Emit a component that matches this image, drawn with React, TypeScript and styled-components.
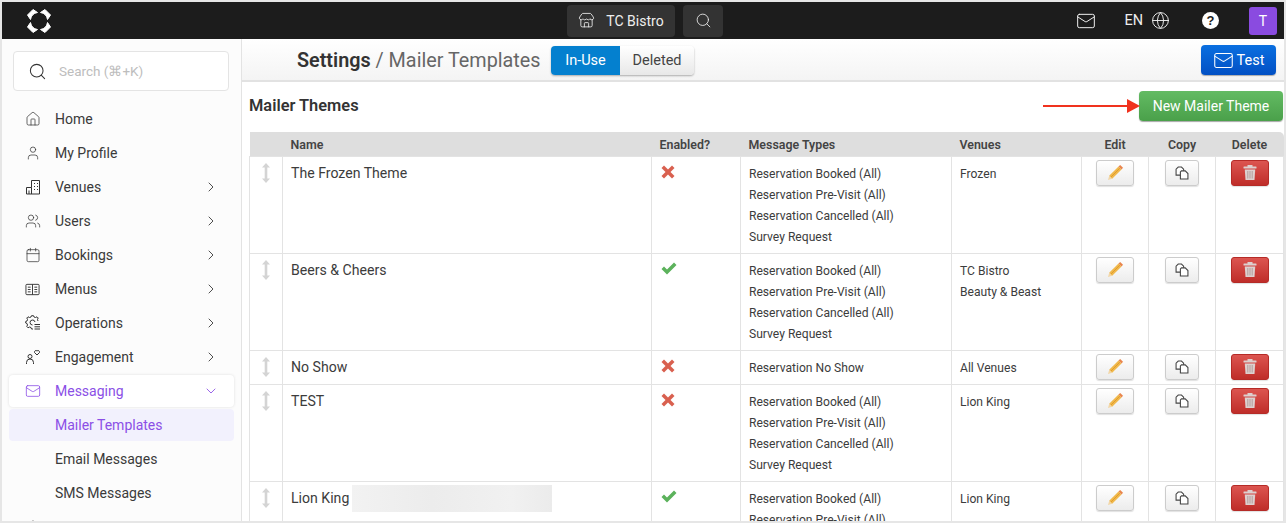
import styled, { createGlobalStyle } from 'styled-components';
import { Home, User, Users, Calendar, Mail, ChevronRight, ChevronDown, Store, Search, Globe } from 'lucide-react';
import type { ReactNode } from 'react';

const GlobalStyle = createGlobalStyle`
  html, body { margin: 0; padding: 0; height: 100%; overflow: hidden; }
  body { font-family: Roboto, "Noto Sans", sans-serif; color: #333; background: #fff; }
  * { box-sizing: border-box; }
`;

const Frame = styled.div`
  width: 1286px;
  height: 523px;
  padding: 2px;
  background: #e6e6e6;
  display: flex;
  flex-direction: column;
  overflow: hidden;
  position: relative;
`;

// ── Top bar ──────────────────────────────────────
const TopBar = styled.header`
  height: 37px;
  flex: none;
  background: #1c1c1c;
  display: grid;
  grid-template-columns: 542px auto 1fr;
  align-items: center;
  color: #eee;
  padding: 0 7px 0 23px;
`;

const LogoWrap = styled.div`
  display: flex;
  align-items: center;
`;

const TopCenter = styled.div`
  display: flex;
  gap: 8px;
`;

const DarkButton = styled.div<{ $w: number }>`
  width: ${p => p.$w}px;
  height: 32px;
  background: #333;
  border-radius: 4px;
  display: flex;
  align-items: center;
  justify-content: center;
  gap: 11px;
  font-size: 14px;
  color: #eee;
`;

const TopRight = styled.div`
  display: flex;
  justify-content: flex-end;
  align-items: center;
`;

const LangText = styled.span`
  font-size: 14.5px;
  margin-left: 28px;
  margin-right: 8px;
`;

const HelpDot = styled.span`
  width: 17px;
  height: 17px;
  border-radius: 50%;
  background: #fff;
  color: #1c1c1c;
  font: 700 13px "Liberation Sans", sans-serif;
  display: flex;
  align-items: center;
  justify-content: center;
  margin-left: 32px;
  margin-right: 30px;
`;

const Avatar = styled.div`
  width: 28px;
  height: 28px;
  border-radius: 3px;
  background: #8a4be0;
  color: #fff;
  font-size: 14px;
  display: flex;
  align-items: center;
  justify-content: center;
`;

// ── Body ──────────────────────────────────────
const Body = styled.div`
  flex: 1;
  min-height: 0;
  display: flex;
  background: #fff;
`;

const Sidebar = styled.aside`
  width: 240px;
  flex: none;
  background: #fcfcfc;
  border-right: 1px solid #e3e3e3;
  padding: 12px 7px 0;
  overflow: hidden;
`;

const SearchBox = styled.div`
  height: 40px;
  margin: 0 5px 12px 4px;
  background: #fff;
  border: 1px solid #e4e4e4;
  border-radius: 4px;
  display: flex;
  align-items: center;
  padding-left: 14px;
  gap: 12px;
  color: #333;
  font-size: 13.5px;
`;

const SearchHint = styled.span`
  color: #bdbdbd;
`;

const NavItem = styled.div<{ $active?: boolean }>`
  height: 32px;
  margin-bottom: 2px;
  display: flex;
  align-items: center;
  padding: 0 15px 0 16px;
  border-radius: 4px;
  font-size: 14px;
  color: ${p => (p.$active ? '#8b4fe6' : '#3a3a3a')};
  background: ${p => (p.$active ? '#fff' : 'transparent')};
  box-shadow: ${p => (p.$active ? '0 0 3px rgba(0,0,0,0.12)' : 'none')};
`;

const NavIcon = styled.span`
  width: 30px;
  display: flex;
  align-items: center;
`;

const NavLabel = styled.span`
  flex: 1;
`;

const SubItem = styled.div<{ $active?: boolean }>`
  height: 32px;
  margin-bottom: 2px;
  display: flex;
  align-items: center;
  padding-left: 46px;
  border-radius: 4px;
  font-size: 14px;
  color: ${p => (p.$active ? '#8b4fe6' : '#3a3a3a')};
  background: ${p => (p.$active ? '#f2f1fd' : 'transparent')};
`;

const Main = styled.main`
  flex: 1;
  min-width: 0;
  display: flex;
  flex-direction: column;
  overflow: hidden;
`;

const PageHead = styled.div`
  height: 43px;
  flex: none;
  border-bottom: 2px solid #e2e2e2;
  background: linear-gradient(#fff, #f4f4f4);
  display: flex;
  align-items: center;
  padding: 1px 8px 0 55px;
`;

const Title = styled.h1`
  margin: 0;
  width: 254px;
  font-size: 19.8px;
  font-weight: 400;
  color: #666;
  white-space: nowrap;
`;

const TitleStrong = styled.strong`
  color: #333;
  font-weight: 600;
`;

const Toggle = styled.div`
  display: flex;
  height: 29px;
  border-radius: 4px;
  box-shadow: 0 1px 2px rgba(0,0,0,0.3);
  overflow: hidden;
  font-size: 14.5px;
`;

const ToggleItem = styled.div<{ $on?: boolean }>`
  display: flex;
  align-items: center;
  justify-content: center;
  width: ${p => (p.$on ? '69px' : '74px')};
  color: ${p => (p.$on ? '#fff' : '#444')};
  background: ${p => (p.$on ? '#0480cf' : 'linear-gradient(#fff, #e8e8e8)')};
`;

const TestButton = styled.button`
  margin-left: auto;
  width: 75px;
  height: 30px;
  border: 0;
  border-radius: 4px;
  background: linear-gradient(#0a6fe0, #0250c4);
  color: #fff;
  font: inherit;
  font-size: 14.5px;
  display: flex;
  align-items: center;
  justify-content: center;
  gap: 3px;
  box-shadow: 0 1px 1px rgba(0,0,0,0.3);
`;

const Content = styled.div`
  padding: 8px 1px 0 7px;
`;

const SectionHead = styled.div`
  display: flex;
  align-items: center;
  justify-content: space-between;
  height: 32px;
  margin-bottom: 10px;
  position: relative;
`;

const SectionTitle = styled.h2`
  margin: 0 0 2px;
  font-size: 16.4px;
  font-weight: 600;
  color: #333;
`;

const GreenButton = styled.button`
  width: 144px;
  height: 30px;
  border: 0;
  border-radius: 4px;
  background: linear-gradient(#63bb63, #4aa04a);
  color: #fff;
  font: inherit;
  font-size: 14px;
  box-shadow: 0 1px 1px rgba(0,0,0,0.35);
`;

const ArrowMark = styled.svg`
  position: absolute;
  right: 143px;
  top: 8px;
`;

const Table = styled.table`
  width: 1034px;
  border-collapse: collapse;
  table-layout: fixed;
  font-size: 12.1px;
`;

const Th = styled.th<{ $center?: boolean }>`
  height: 24px;
  padding: 1px 8px 0;
  background: #dedede;
  font-size: 12.4px;
  font-weight: 600;
  color: #444;
  text-align: ${p => (p.$center ? 'center' : 'left')};

  &:last-child {
    border-top-right-radius: 5px;
  }
`;

const Td = styled.td<{ $center?: boolean }>`
  border: 1px solid #e3e3e3;
  vertical-align: top;
  padding: 7px 8px 5px;
  text-align: ${p => (p.$center ? 'center' : 'left')};
  color: #3c3c3c;
`;

const DragCell = styled(Td)`
  padding: 6px 0;

  svg {
    display: block;
    margin: 0 auto;
  }
`;

const NameCell = styled(Td)`
  font-size: 14.1px;
  line-height: 21px;
  padding-top: 6px;
`;

const EnabledCell = styled(Td)`
  padding: 8px 8px 0 9px;

  svg {
    display: block;
  }
`;

const ActionCell = styled(Td)`
  padding: 3px 8px;
`;

const NameRow = styled.div`
  display: flex;
  align-items: center;
  gap: 3px;
  white-space: nowrap;
`;

const Redacted = styled.span`
  display: block;
  width: 200px;
  height: 27px;
  margin: -3px 0;
  background: linear-gradient(90deg, #f2f2f2, #ececec 40%, #f1f1f1 80%, #ebebeb);
  flex: none;
`;

const Line = styled.div`
  line-height: 21px;
  white-space: nowrap;
`;

const ActionButton = styled.button<{ $kind: 'plain' | 'danger' }>`
  width: ${p => (p.$kind === 'danger' ? '38px' : '34px')};
  height: 26px;
  padding: 0;
  margin: 0 auto;
  display: flex;
  align-items: center;
  justify-content: center;
  border-radius: 3px;
  border: 1px solid ${p => (p.$kind === 'danger' ? '#b52b27' : '#ccc')};
  background: ${p => (p.$kind === 'danger' ? 'linear-gradient(#dc5550, #bf2d29)' : 'linear-gradient(#fff, #ececec)')};
  box-shadow: 0 1px 1px rgba(0,0,0,0.12);
`;

const EditButton = styled(ActionButton)`
  width: 38px;
`;

// ── Icons ──────────────────────────────────────
const Logo = () => (
  <svg width="28" height="28" viewBox="0 0 28 28" fill="#fff" stroke="#fff" strokeWidth="1" strokeLinejoin="round">
    <path d="M8 2.500 L12.500 5.500 Q6.500 6.500 5.500 12.500 L2.500 8 Z" />
    <path d="M20 2.500 L25.500 8 L22.500 12.500 Q21.500 6.500 15.500 5.500 Z" />
    <path d="M2.500 20 L5.500 15.500 Q6.500 21.500 12.500 22.500 L8 25.500 Z" />
    <path d="M25.500 20 L20 25.500 L15.500 22.500 Q21.500 21.500 22.500 15.500 Z" />
  </svg>
);

const BuildingGlyph = () => (
  <svg width="16" height="16" viewBox="0 0 16 16" fill="none" stroke="#333" strokeWidth="1">
    <path d="M1.500 15 V8.500 H6.500 V1.500 H14.500 V15 Z" />
    <path d="M6.500 8.500 V15 M4 11.500 V15" />
    <path d="M9 4.500h1M12 4.500h1M9 7.500h1M12 7.500h1M9 10.500h1M12 10.500h1" />
  </svg>
);

const MenuGlyph = () => (
  <svg width="15" height="15" viewBox="0 0 16 16" fill="none" stroke="#333" strokeWidth="1">
    <rect x="1" y="2.500" width="14" height="11" rx="1" />
    <path d="M8 2.500v11M3 5.500h3M3 8h3M3 10.500h3M10 5.500h3M10 8h3M10 10.500h3" />
  </svg>
);

const OperationsGlyph = () => (
  <svg width="16" height="16" viewBox="0 0 16 16" fill="none" stroke="#333" strokeWidth="1">
    <path d="M8 14 H6.500 L6 12.500 L4.500 12 L3 12.800 L1.800 11.500 L2.500 10 L2 8.500 L.7 8 V6.500 L2 6 L2.500 4.500 L1.800 3 L3 1.800 L4.500 2.500 L6 2 L6.500 .7 H8.500 L9 2 L10.500 2.500 L12 1.800 L13.200 3 L12.500 4.500 L13 6" />
    <path d="M7.500 10 A2.500 2.500 0 1 1 10 7" />
    <path d="M9.500 9.500 H15 M9.500 11.800 H15 M9.500 14 H15" />
  </svg>
);

const EngageGlyph = () => (
  <svg width="16" height="16" viewBox="0 0 16 16" fill="none" stroke="#333" strokeWidth="1">
    <circle cx="5" cy="7.500" r="2" />
    <path d="M1.500 15v-1.500a3 3 0 0 1 7 0V15" />
    <path d="M12 6 L9.500 3.500a1.500 1.500 0 0 1 2.500-1.500a1.500 1.500 0 0 1 2.500 1.500Z" />
  </svg>
);

const DragGlyph = () => (
  <svg width="10" height="20" viewBox="0 0 10 20" fill="#d4d4d4">
    <path d="M5 0 L9 4.500 H6.300 V15.500 H9 L5 20 L1 15.500 H3.700 V4.500 H1 Z" />
  </svg>
);

const Cross = () => (
  <svg width="14" height="14" viewBox="0 0 14 14" fill="#d9604f">
    <path d="M3 .5 L7 4.500 L11 .5 L13.500 3 L9.500 7 L13.500 11 L11 13.500 L7 9.500 L3 13.500 L.5 11 L4.500 7 L.5 3 Z" />
  </svg>
);

const Check = () => (
  <svg width="16" height="13" viewBox="0 0 16 13" fill="#5cb25c">
    <path d="M0.500 7 L3 4.500 L6 7.500 L13 .5 L15.500 3 L6 12.500 Z" />
  </svg>
);

const PencilGlyph = () => (
  <svg width="17" height="17" viewBox="0 0 17 17">
    <path d="M1 16 L2.200 11.800 L5.200 14.800 Z" fill="#f2d6a6" />
    <path d="M2.200 11.800 L11.500 2.500 L14.500 5.500 L5.200 14.800 Z" fill="#f0b84a" />
    <path d="M4 13 L12.800 4.200" stroke="#dc9428" strokeWidth="0.800" />
    <path d="M11.500 2.500 L13.200 1 L16 3.800 L14.500 5.500 Z" fill="#e8854d" />
  </svg>
);

const CopyGlyph = () => (
  <svg width="14" height="14" viewBox="0 0 13 13" fill="#fff" stroke="#444" strokeWidth="1">
    <path d="M3 1 H6 L8 3 V8.500 H1 V3 Z" />
    <path d="M6 4.500 H9.500 L12 7 V12 H5 V5.500 Z" />
  </svg>
);

const TrashGlyph = () => (
  <svg width="14" height="17" viewBox="0 0 14 17" fill="#ddd0cf">
    <rect x="0.500" y="2.500" width="13" height="2" rx="0.500" />
    <rect x="4.500" y="1" width="5" height="2" />
    <path d="M1.800 5.500 H12.200 L11.500 16 H2.500 Z" />
    <path d="M4.800 7 V14.500 M7 7 V14.500 M9.200 7 V14.500" stroke="#a8908e" strokeWidth="0.800" />
  </svg>
);

// ── Data ──────────────────────────────────────
const iconProps = { size: 16, strokeWidth: 1.1, color: '#333' };

const navItems: { label: string; icon: ReactNode; arrow?: boolean }[] = [
  { label: 'Home', icon: <Home {...iconProps} /> },
  { label: 'My Profile', icon: <User {...iconProps} /> },
  { label: 'Venues', icon: <BuildingGlyph />, arrow: true },
  { label: 'Users', icon: <Users {...iconProps} />, arrow: true },
  { label: 'Bookings', icon: <Calendar {...iconProps} />, arrow: true },
  { label: 'Menus', icon: <MenuGlyph />, arrow: true },
  { label: 'Operations', icon: <OperationsGlyph />, arrow: true },
  { label: 'Engagement', icon: <EngageGlyph />, arrow: true },
];

const fullTypes = ['Reservation Booked (All)', 'Reservation Pre-Visit (All)', 'Reservation Cancelled (All)', 'Survey Request'];

const rows = [
  { name: 'The Frozen Theme', enabled: false, types: fullTypes, venues: ['Frozen'] },
  { name: 'Beers & Cheers', enabled: true, types: fullTypes, venues: ['TC Bistro', 'Beauty & Beast'] },
  { name: 'No Show', enabled: false, types: ['Reservation No Show'], venues: ['All Venues'] },
  { name: 'TEST', enabled: false, types: fullTypes, venues: ['Lion King'] },
  { name: 'Lion King', enabled: true, types: fullTypes, venues: ['Lion King'], redacted: true },
];

const colWidths = [33, 369, 89, 211, 130, 67, 67, 68];

export default function App() {
  return (
    <Frame>
      <GlobalStyle />
      <TopBar>
        <LogoWrap><Logo /></LogoWrap>
        <TopCenter>
          <DarkButton $w={108}><Store size={17} strokeWidth={1.2} />TC Bistro</DarkButton>
          <DarkButton $w={40}><Search size={17} strokeWidth={1.2} /></DarkButton>
        </TopCenter>
        <TopRight>
          <Mail size={20} strokeWidth={1.2} />
          <LangText>EN</LangText>
          <Globe size={19} strokeWidth={1.2} />
          <HelpDot>?</HelpDot>
          <Avatar>T</Avatar>
        </TopRight>
      </TopBar>
      <Body>
        <Sidebar>
          <SearchBox>
            <Search size={19} strokeWidth={1.3} />
            <SearchHint>Search (⌘+K)</SearchHint>
          </SearchBox>
          {navItems.map(item => (
            <NavItem key={item.label}>
              <NavIcon>{item.icon}</NavIcon>
              <NavLabel>{item.label}</NavLabel>
              {item.arrow && <ChevronRight size={16} strokeWidth={1.3} color="#333" />}
            </NavItem>
          ))}
          <NavItem $active>
            <NavIcon><Mail size={16} strokeWidth={1.2} color="#8b4fe6" /></NavIcon>
            <NavLabel>Messaging</NavLabel>
            <ChevronDown size={16} strokeWidth={1.3} />
          </NavItem>
          <SubItem $active>Mailer Templates</SubItem>
          <SubItem>Email Messages</SubItem>
          <SubItem>SMS Messages</SubItem>
          <NavItem>
            <NavIcon><User {...iconProps} /></NavIcon>
          </NavItem>
        </Sidebar>
        <Main>
          <PageHead>
            <Title><TitleStrong>Settings</TitleStrong> / Mailer Templates</Title>
            <Toggle>
              <ToggleItem $on>In-Use</ToggleItem>
              <ToggleItem>Deleted</ToggleItem>
            </Toggle>
            <TestButton><Mail size={21} strokeWidth={1.2} />Test</TestButton>
          </PageHead>
          <Content>
            <SectionHead>
              <SectionTitle>Mailer Themes</SectionTitle>
              <ArrowMark width="97" height="16" viewBox="0 0 97 16">
                <path d="M0 8 H86" stroke="#f0321e" strokeWidth="2" />
                <path d="M84 1 L97 8 L84 15 Z" fill="#f0321e" />
              </ArrowMark>
              <GreenButton>New Mailer Theme</GreenButton>
            </SectionHead>
            <Table>
              <colgroup>
                {colWidths.map((w, i) => <col key={i} style={{ width: w }} />)}
              </colgroup>
              <thead>
                <tr>
                  <Th />
                  <Th>Name</Th>
                  <Th>Enabled?</Th>
                  <Th>Message Types</Th>
                  <Th>Venues</Th>
                  <Th $center>Edit</Th>
                  <Th $center>Copy</Th>
                  <Th $center>Delete</Th>
                </tr>
              </thead>
              <tbody>
                {rows.map(row => (
                  <tr key={row.name}>
                    <DragCell><DragGlyph /></DragCell>
                    <NameCell>
                      <NameRow>{row.name}{row.redacted && <Redacted />}</NameRow>
                    </NameCell>
                    <EnabledCell>{row.enabled ? <Check /> : <Cross />}</EnabledCell>
                    <Td>{row.types.map(t => <Line key={t}>{t}</Line>)}</Td>
                    <Td>{row.venues.map(v => <Line key={v}>{v}</Line>)}</Td>
                    <ActionCell $center><EditButton $kind="plain"><PencilGlyph /></EditButton></ActionCell>
                    <ActionCell $center><ActionButton $kind="plain"><CopyGlyph /></ActionButton></ActionCell>
                    <ActionCell $center><ActionButton $kind="danger"><TrashGlyph /></ActionButton></ActionCell>
                  </tr>
                ))}
              </tbody>
            </Table>
          </Content>
        </Main>
      </Body>
    </Frame>
  );
}
